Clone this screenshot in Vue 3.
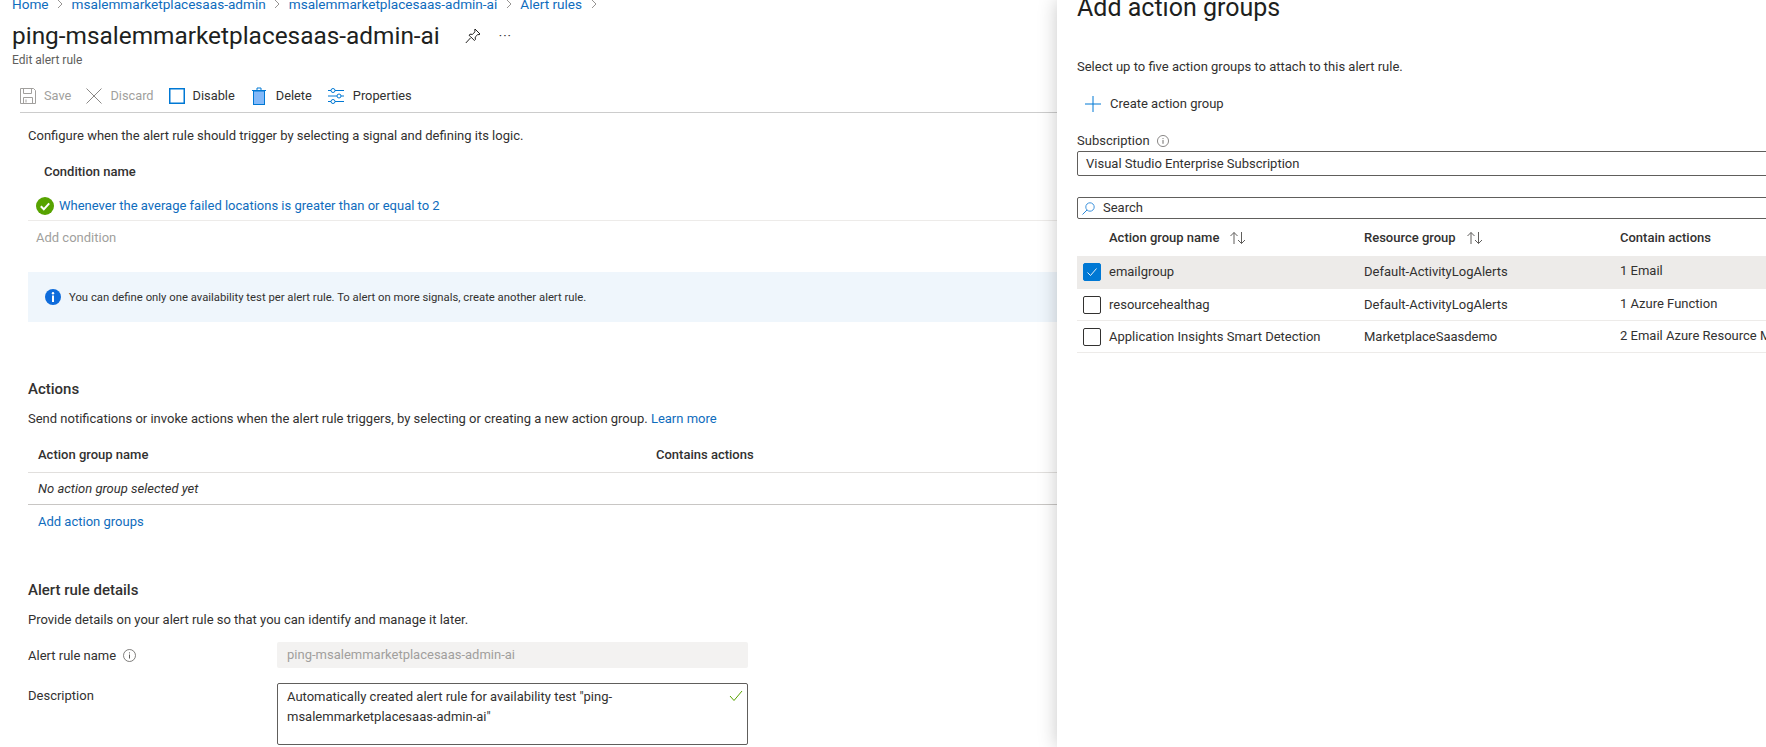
<script setup>
const crumbs = ['Home', 'msalemmarketplacesaas-admin', 'msalemmarketplacesaas-admin-ai', 'Alert rules']
const rows = [
  { name: 'emailgroup', group: 'Default-ActivityLogAlerts', act: '1 Email', on: true },
  { name: 'resourcehealthag', group: 'Default-ActivityLogAlerts', act: '1 Azure Function', on: false },
  { name: 'Application Insights Smart Detection', group: 'MarketplaceSaasdemo', act: '2 Email Azure Resource Manager Role', on: false }
]
</script>

<template>
  <div class="page">
    <main class="left">
      <nav class="crumbs">
        <template v-for="c in crumbs" :key="c">
          <a>{{ c }}</a>
          <svg class="chev" width="6" height="10" viewBox="0 0 6 10"><path d="M1 1l4 4-4 4" fill="none" stroke="#8a8886" stroke-width=".9"/></svg>
        </template>
      </nav>
      <div class="title-row">
        <h1>ping-msalemmarketplacesaas-admin-ai</h1>
        <svg class="pin" width="16" height="16" viewBox="0 0 16 16"><path d="M10 1l5 5-1 .7-1.200-.2-2.600 2.600.2 2.400-1 1L5.600 8.700 4 7.200l1-1 2.400.2L10 3.800 9.800 2zM5.600 9.800L.8 15" fill="none" stroke="#201f1e" stroke-width="1"/></svg>
        <span class="more">···</span>
      </div>
      <div class="sub">Edit alert rule</div>
      <div class="toolbar">
        <span class="tool off">
          <svg width="16" height="16" viewBox="0 0 16 16"><path d="M.5.5h13l2 2v13H.5zM3.500.5v5h8v-5M3.500 15.500v-6h9v6M6 11.500v3" fill="none" stroke="#a19f9d"/></svg>Save
        </span>
        <span class="tool off">
          <svg width="16" height="16" viewBox="0 0 16 16"><path d="M.5.5l15 15M15.500.5l-15 15" fill="none" stroke="#8a8886"/></svg>Discard
        </span>
        <span class="tool">
          <svg width="16" height="16" viewBox="0 0 16 16"><rect x=".75" y=".75" width="14.500" height="14.500" fill="none" stroke="#0078d4" stroke-width="1.500"/></svg>Disable
        </span>
        <span class="tool del">
          <svg width="14" height="18" viewBox="0 0 14 18"><path d="M0 3.500h14M5 3V1h4v2" fill="none" stroke="#0078d4"/><rect x="1.500" y="4" width="11" height="13.500" fill="#83b9f9" stroke="#0078d4"/></svg>Delete
        </span>
        <span class="tool props">
          <svg width="16" height="16" viewBox="0 0 16 16"><g fill="none" stroke="#0078d4"><path d="M0 2.500h3M7 2.500h9M0 8h9M13 8h3M0 13.500h3M7 13.500h9"/><circle cx="5" cy="2.500" r="2"/><circle cx="11" cy="8" r="2"/><circle cx="5" cy="13.500" r="2"/></g></svg>Properties
        </span>
      </div>
      <p class="intro">Configure when the alert rule should trigger by selecting a signal and defining its logic.</p>
      <div class="cond-head">Condition name</div>
      <div class="cond-row">
        <svg width="18" height="18" viewBox="0 0 18 18"><circle cx="9" cy="9" r="9" fill="#57a300"/><path d="M4.800 9.300l3 3 5.400-6" fill="none" stroke="#fff" stroke-width="2"/></svg>
        <a>Whenever the average failed locations is greater than or equal to 2</a>
      </div>
      <div class="add-cond">Add condition</div>
      <div class="info">
        <svg width="16" height="16" viewBox="0 0 16 16"><circle cx="8" cy="8" r="8" fill="#0f6cdb"/><rect x="7" y="6.500" width="2" height="6.500" fill="#fff"/><circle cx="8" cy="4.300" r="1.200" fill="#fff"/></svg>
        <span class="info-text">You can define only one availability test per alert rule. To alert on more signals, create another alert rule.</span>
      </div>
      <h2 class="actions-h">Actions</h2>
      <p class="para first">Send notifications or invoke actions when the alert rule triggers, by selecting or creating a new action group. <a>Learn more</a></p>
      <div class="act-table">
        <div class="act-head"><span class="c1">Action group name</span><span>Contains actions</span></div>
        <div class="act-empty">No action group selected yet</div>
        <a class="act-add">Add action groups</a>
      </div>
      <h2 class="details-h">Alert rule details</h2>
      <p class="para second">Provide details on your alert rule so that you can identify and manage it later.</p>
      <div class="field name">
        <label>Alert rule name <svg class="i" width="13" height="13" viewBox="0 0 13 13"><circle cx="6.500" cy="6.500" r="6" fill="none" stroke="#605e5c" stroke-width=".8"/><path d="M6.500 5.500v4M6.500 3.400v1" stroke="#605e5c"/></svg></label>
        <div class="ro">ping-msalemmarketplacesaas-admin-ai</div>
      </div>
      <div class="field desc">
        <label>Description</label>
        <div class="ta">Automatically created alert rule for availability test "ping-<br>msalemmarketplacesaas-admin-ai"
          <svg class="ok" width="14" height="12" viewBox="0 0 14 12"><path d="M1 6l4 4.500L13 1" fill="none" stroke="#57a300"/></svg>
        </div>
      </div>
    </main>

    <aside class="panel">
      <h2 class="p-title">Add action groups</h2>
      <p class="p-intro">Select up to five action groups to attach to this alert rule.</p>
      <div class="create">
        <svg width="16" height="16" viewBox="0 0 16 16"><path d="M8 0v16M0 8h16" stroke="#0078d4"/></svg>
        <span>Create action group</span>
      </div>
      <div class="sub-label">Subscription <svg class="i" width="12" height="12" viewBox="0 0 13 13"><circle cx="6.500" cy="6.500" r="6" fill="none" stroke="#605e5c" stroke-width=".8"/><path d="M6.500 5.500v4M6.500 3.400v1" stroke="#605e5c"/></svg></div>
      <div class="box sel">Visual Studio Enterprise Subscription</div>
      <div class="box search">
        <svg width="13" height="13" viewBox="0 0 13 13"><circle cx="8" cy="5" r="4.200" fill="none" stroke="#2b88d8" stroke-width=".9"/><path d="M5 8l-4.500 4.500" stroke="#2b88d8"/></svg>
        <span>Search</span>
      </div>
      <div class="t-head t-grid">
        <span></span>
        <span class="h">Action group name <svg width="18" height="14" viewBox="0 0 18 14"><path d="M5 13V1.500M1.500 5L5 1.500 8.500 5M12.500 1v11.500M9 9l3.500 3.500L16 9" fill="none" stroke="#605e5c"/></svg></span>
        <span class="h">Resource group <svg width="18" height="14" viewBox="0 0 18 14"><path d="M5 13V1.500M1.500 5L5 1.500 8.500 5M12.500 1v11.500M9 9l3.500 3.500L16 9" fill="none" stroke="#605e5c"/></svg></span>
        <span class="h">Contain actions</span>
      </div>
      <div v-for="r in rows" :key="r.name" class="t-row t-grid" :class="{ on: r.on }">
        <span class="cb" :class="{ on: r.on }">
          <svg v-if="r.on" width="12" height="12" viewBox="0 0 12 12"><path d="M1.500 6.500l3 3L10.500 2.500" fill="none" stroke="#fff" stroke-width=".9"/></svg>
        </span>
        <span>{{ r.name }}</span>
        <span>{{ r.group }}</span>
        <span class="act">{{ r.act }}</span>
      </div>
    </aside>
  </div>
</template>

<style>
html, body { margin: 0; background: #fff; overflow: hidden; }
</style>

<style scoped>
.page { position: relative; width: 1766px; height: 747px; overflow: hidden; background: #fff; font: 13px/18px Roboto, "Liberation Sans", sans-serif; color: #323130; }
a { color: #0f6cbd; }
p, h1, h2 { margin: 0; font-weight: inherit; }
.left { padding-left: 28px; }
.crumbs { margin: -5px 0 0 -16px; height: 18px; display: flex; align-items: center; gap: 8.500px; font-size: 13.600px; }
.title-row { margin: 6px 0 0 -16px; height: 34px; display: flex; align-items: center; }
h1 { font-size: 24.400px; line-height: 34px; font-weight: 400; color: #201f1e; }
.pin { margin-left: 25px; }
.more { margin-left: 18px; font-size: 13px; letter-spacing: 1px; }
.sub { margin: -1px 0 0 -16px; height: 16px; font-size: 12px; line-height: 16px; color: #605e5c; }
.toolbar { margin: 10px 0 0 -8px; height: 32px; padding-top: 2px; display: flex; align-items: center; gap: 15px; border-bottom: 1px solid #ccc; width: 1100px; font-size: 12.800px; }
.tool { display: flex; align-items: center; gap: 8px; }
.tool.del { margin-left: 2px; gap: 10px; }
.tool.props { margin-left: 1px; gap: 9px; }
.tool.off { color: #a19f9d; }
.intro { margin-top: 14px; height: 18px; }
.cond-head { margin: 18px 0 0 16px; font-weight: 500; height: 18px; }
.cond-row { margin-top: 16px; height: 23px; display: flex; gap: 5px; padding-left: 8px; align-items: flex-start; border-bottom: 1px solid #edebe9; width: 1100px; }
.add-cond { margin: 8px 0 0 8px; color: #a19f9d; height: 18px; }
.info { margin-top: 25px; height: 50px; width: 1100px; background: #eff6fc; display: flex; align-items: center; gap: 8px; padding-left: 17px; box-sizing: border-box; font-size: 11.300px; }
.info-text { padding-top: 2px; }
.actions-h { margin-top: 57px; font-size: 15px; line-height: 20px; font-weight: 500; }
.para { height: 18px; }
.para.first { margin-top: 11px; }
.para.second { margin-top: 11px; }
.act-table { margin-top: 18px; width: 1100px; }
.act-head { height: 26px; display: flex; padding-left: 10px; font-weight: 500; border-bottom: 1px solid #e1dfdd; }
.c1 { width: 618px; }
.act-empty { height: 31px; padding-left: 10px; font-style: italic; line-height: 32px; border-bottom: 1px solid #c8c6c4; }
.act-add { display: block; margin: 8px 0 0 10px; height: 18px; }
.details-h { margin-top: 49px; font-size: 15px; line-height: 20px; font-weight: 500; }
.field { display: flex; }
.field.name { margin-top: 13px; }
.field.desc { margin-top: 14px; }
.field label { width: 249px; line-height: 27px; }
.field.desc label { line-height: 25px; }
.i { vertical-align: -2px; margin-left: 4px; }
.ro { width: 471px; height: 26px; box-sizing: border-box; background: #f3f2f1; color: #a19f9d; padding-left: 10px; line-height: 26px; border-radius: 2px; }
.ta { position: relative; width: 471px; height: 62px; box-sizing: border-box; border: 1px solid #605e5c; border-radius: 2px; padding: 3px 9px; line-height: 20px; color: #323130; }
.ok { position: absolute; right: 4px; top: 6px; }
.panel { position: absolute; top: 0; bottom: 0; left: 1057px; width: 760px; background: #fff; box-shadow: 0 0 18px rgba(0,0,0,.22); padding-left: 20px; box-sizing: border-box; }
.p-title { margin-top: -8px; font-size: 25px; line-height: 32px; color: #201f1e; }
.p-intro { margin-top: 34px; height: 18px; }
.create { margin: 19px 0 0 8px; height: 18px; display: flex; gap: 9px; align-items: center; }
.sub-label { margin-top: 19px; height: 18px; }
.box { margin-top: 1px; height: 25px; box-sizing: border-box; border: 1px solid #605e5c; border-radius: 2px; line-height: 23px; padding-left: 8px; width: 740px; }
.search { margin-top: 21px; height: 22px; line-height: 20px; display: flex; gap: 8px; align-items: center; padding-left: 4px; }
.t-grid { display: grid; grid-template-columns: 32px 255px 256px 1fr; align-items: center; width: 740px; }
.t-head { height: 37px; font-weight: 500; }
.h { display: flex; align-items: center; gap: 10px; }
.t-row { height: 32px; box-sizing: border-box; border-bottom: 1px solid #edebe9; }
.t-row.on { background: #edebe9; border-bottom-color: #edebe9; height: 33px; }
.act { white-space: nowrap; transform: translateY(-1px); }
.cb { width: 18px; height: 18px; box-sizing: border-box; margin-left: 6px; border: 1px solid #323130; border-radius: 2px; display: flex; align-items: center; justify-content: center; background: #fff; }
.cb.on { background: #0078d4; border-color: #0078d4; }
</style>
